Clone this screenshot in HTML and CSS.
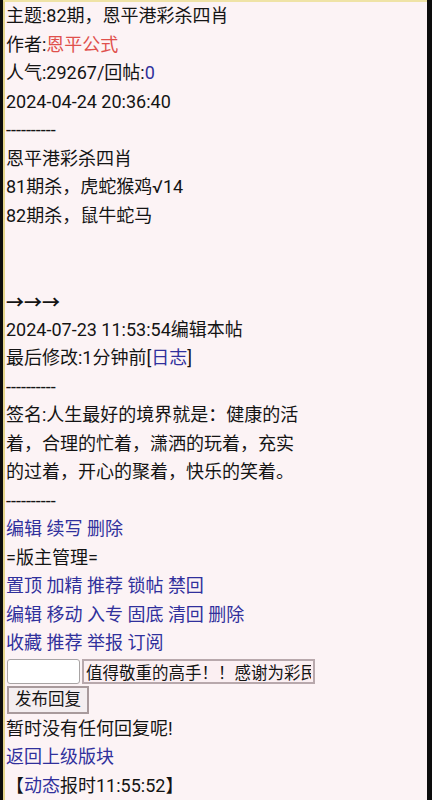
FILE: index.html
```html
<!DOCTYPE html>
<html>
<head>
    <meta charset="utf-8">
    <title>恩平港彩杀四肖</title>
    <link rel="stylesheet" href="styles.css">
</head>
<body>
    <div class="page">
        <div class="line">主题:82期，恩平港彩杀四肖</div>
        <div class="line">作者:<span class="author">恩平公式</span></div>
        <div class="line">人气:29267/回帖:<a href="#" class="link">0</a></div>
        <div class="line">2024-04-24 20:36:40</div>
        <div class="line">----------</div>
        <div class="line">恩平港彩杀四肖</div>
        <div class="line">81期杀，虎蛇猴鸡√14</div>
        <div class="line">82期杀，鼠牛蛇马</div>
        <div class="line blank"></div>
        <div class="line blank"></div>
        <div class="line arrows">→→→</div>
        <div class="line">2024-07-23 11:53:54编辑本帖</div>
        <div class="line">最后修改:1分钟前[<a href="#" class="link">日志</a>]</div>
        <div class="line">----------</div>
        <div class="line sign">签名:人生最好的境界就是：健康的活着，合理的忙着，潇洒的玩着，充实的过着，开心的聚着，快乐的笑着。</div>
        <div class="line">----------</div>
        <div class="line">
            <a href="#" class="link">编辑</a>
            <a href="#" class="link">续写</a>
            <a href="#" class="link">删除</a>
        </div>
        <div class="line">=版主管理=</div>
        <div class="line">
            <a href="#" class="link">置顶</a>
            <a href="#" class="link">加精</a>
            <a href="#" class="link">推荐</a>
            <a href="#" class="link">锁帖</a>
            <a href="#" class="link">禁回</a>
        </div>
        <div class="line">
            <a href="#" class="link">编辑</a>
            <a href="#" class="link">移动</a>
            <a href="#" class="link">入专</a>
            <a href="#" class="link">固底</a>
            <a href="#" class="link">清回</a>
            <a href="#" class="link">删除</a>
        </div>
        <div class="line">
            <a href="#" class="link">收藏</a>
            <a href="#" class="link">推荐</a>
            <a href="#" class="link">举报</a>
            <a href="#" class="link">订阅</a>
        </div>
        <form class="reply-form">
            <div class="reply-row">
                <input type="text" class="reply-input">
                <input type="text" class="reply-quick" value="值得敬重的高手！！感谢为彩民服务">
            </div>
            <div class="reply-row">
                <button type="submit" class="reply-btn">发布回复</button>
            </div>
        </form>
        <div class="line">暂时没有任何回复呢!</div>
        <div class="line"><a href="#" class="link">返回上级版块</a></div>
        <div class="line last">【<a href="#" class="link">动态</a>报时11:55:52】</div>
    </div>
</body>
</html>
```

FILE: styles.css
```css
body {
    margin: 0;
    background-color: #0c0c0c;
    font-family: Roboto, "Noto Sans CJK SC", sans-serif;
    font-size: 18px;
    color: #141414;
}

.page {
    margin: 0 5px 0 3px;
    padding-left: 1px;
    border-left: 2px solid #e4d48c;
    border-top: 2px solid #efe3a6;
    background-color: #fcf3f5;
    min-height: 798px;
    box-sizing: border-box;
}

.line {
    line-height: 28.5px;
    white-space: nowrap;
}

.line.blank {
    height: 28.5px;
}

.arrows {
    font-family: "Noto Sans CJK SC", sans-serif;
    font-weight: bold;
}

.sign {
    white-space: normal;
    max-width: 302px;
}

.author {
    color: #e0504c;
}

.link {
    color: #30309c;
    text-decoration: none;
}

.last {
    border-bottom: 1px solid #c8c0c2;
}

.reply-form {
    margin: 0;
}

.reply-row {
    display: flex;
    align-items: center;
    gap: 2px;
    height: 28.5px;
    padding-left: 1px;
}

.reply-input {
    width: 73px;
    height: 25px;
    box-sizing: border-box;
    border: 1px solid #a8a4a4;
    border-radius: 3px;
    background-color: #fff;
    padding: 0;
}

.reply-quick {
    width: 233px;
    height: 25px;
    box-sizing: border-box;
    border: 2px solid #b8a8ac;
    background-color: #fbeff2;
    font-family: Roboto, "Noto Sans CJK SC", sans-serif;
    font-size: 16.5px;
    color: #141414;
    padding: 0 2px;
}

.reply-btn {
    height: 28px;
    box-sizing: border-box;
    border: 2px solid #a89a9c;
    background-color: #f4eef0;
    font-family: Roboto, "Noto Sans CJK SC", sans-serif;
    font-size: 16.5px;
    color: #141414;
    padding: 0 6px;
    line-height: 22px;
}
```
